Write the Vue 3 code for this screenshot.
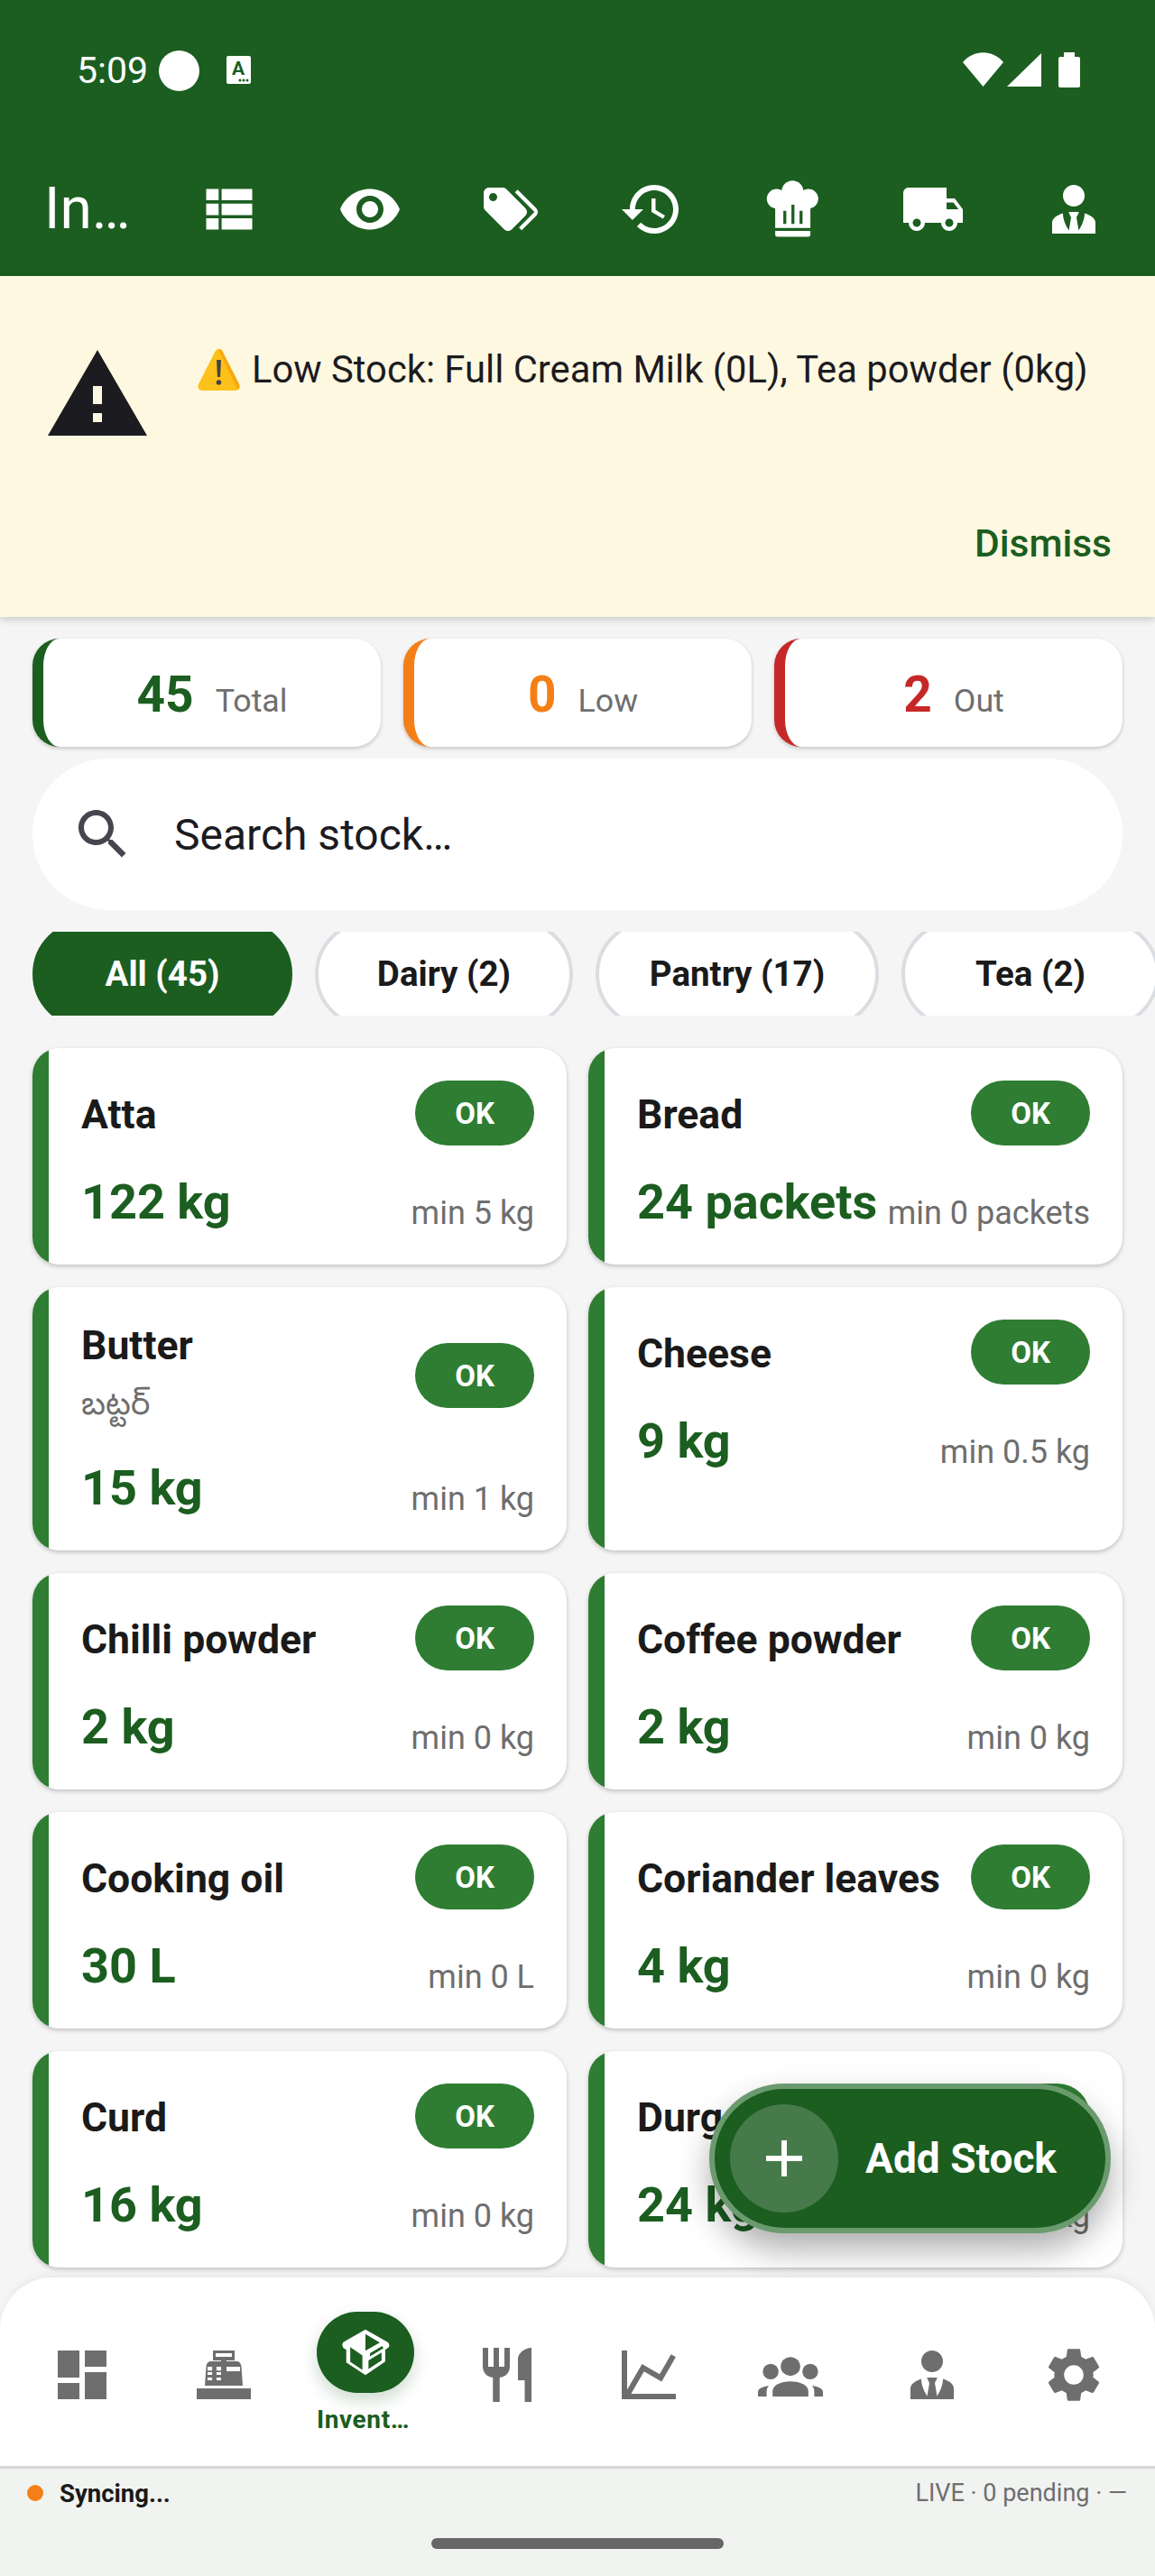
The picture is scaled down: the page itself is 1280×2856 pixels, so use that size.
<script setup>
const paths = {
  viewList: 'M3.500 14.200h4.600v-4.300H3.500v4.300zm0 5.300h4.600v-4.200H3.500v4.200zM3.500 8.700h4.600V4.500H3.500v4.200zm5.700 5.500h11.300v-4.300H9.200v4.300zm0 5.300h11.300v-4.200H9.200v4.200zm0-15v4.200h11.300V4.500H9.200z',
  visibility: 'M12 4.500C7 4.500 2.730 7.610 1 12c1.730 4.390 6 7.500 11 7.500s9.270-3.110 11-7.500c-1.730-4.390-6-7.500-11-7.500zM12 17c-2.760 0-5-2.240-5-5s2.240-5 5-5 5 2.240 5 5-2.240 5-5 5zm0-8c-1.660 0-3 1.340-3 3s1.340 3 3 3 3-1.340 3-3-1.340-3-3-3z',
  tags: 'M5.500,9A1.500,1.500 0 0,0 7,7.500A1.500,1.500 0 0,0 5.500,6A1.500,1.500 0 0,0 4,7.500A1.500,1.500 0 0,0 5.500,9M17.410,11.580C17.770,11.940 18,12.440 18,13C18,13.550 17.780,14.050 17.410,14.410L12.410,19.410C12.050,19.770 11.550,20 11,20C10.450,20 9.950,19.780 9.580,19.410L2.590,12.420C2.220,12.050 2,11.550 2,11V6C2,4.890 2.890,4 4,4H9C9.550,4 10.050,4.220 10.410,4.580L17.410,11.580M13.540,5.710L14.540,4.710L21.410,11.580C21.780,11.940 22,12.450 22,13C22,13.550 21.780,14.050 21.420,14.410L16.040,19.790L15.040,18.790L20.750,13L13.540,5.710Z',
  history: 'M13 3c-4.970 0-9 4.030-9 9H1l3.890 3.890.070.140L9 12H6c0-3.870 3.130-7 7-7s7 3.130 7 7-3.130 7-7 7c-1.930 0-3.680-.790-4.940-2.060l-1.420 1.420C8.270 19.990 10.510 21 13 21c4.970 0 9-4.030 9-9s-4.030-9-9-9zm-1 5v5l4.280 2.540.720-1.210-3.500-2.080V8H12z',
  truck: 'M20 8h-3V4H3c-1.100 0-2 .9-2 2v11h2c0 1.660 1.340 3 3 3s3-1.340 3-3h6c0 1.660 1.340 3 3 3s3-1.340 3-3h2v-5l-3-4zM6 18.500c-.830 0-1.500-.670-1.500-1.500s.670-1.500 1.500-1.500 1.500.670 1.500 1.500-.670 1.500-1.500 1.500zm13.500-9l1.960 2.500H17V9.500h2.500zm-1.500 9c-.830 0-1.500-.670-1.500-1.500s.670-1.500 1.500-1.500 1.500.670 1.500 1.500-.670 1.500-1.500 1.500z',
  tie: 'M12 3C14.210 3 16 4.790 16 7S14.210 11 12 11 8 9.210 8 7 9.790 3 12 3M16 13.540C16 14.600 15.720 17.070 13.810 19.830L13 15L13.940 13.120C13.320 13.050 12.670 13 12 13C11.330 13 10.680 13.050 10.060 13.120L11 15L10.190 19.830C8.280 17.070 8 14.600 8 13.540C5.610 14.240 4 15.500 4 17V21H20V17C20 15.500 18.400 14.240 16 13.540Z',
  dashboard: 'M3 13h8V3H3v10zm0 8h8v-6H3v6zm10 0h8V11h-8v10zm0-18v6h8V3h-8z',
  register: 'M2 17h20v4H2zM8 3h8v3.700h-3v.3h3.700c1 0 1.700.7 1.800 2L19 16H5l.5-7c.1-1.300.8-2 1.800-2H11v-.3H8zM9 4v1.300h6V4zM6 9v1.400h1.700V9zM9.300 9v1.400H11V9zM13 9v1.700h5V9zM6 11v1h1.700v-1zM9.300 11v1H11v-1zM6 13v1h1.700v-1zM9.300 13v1H11v-1z',
  restaurant: 'M11 9H9V2H7v7H5V2H3v7c0 2.120 1.660 3.840 3.750 3.970V22h2.500v-9.030C11.340 12.840 13 11.120 13 9V2h-2v7zm5-3v8h2.500v8H21V2c-2.760 0-5 2.240-5 4z',
  chart: 'M16,11.780L20.240,4.450L21.970,5.450L16.740,14.500L10.230,10.750L5.460,19H22V21H2V3H4V17.540L9.500,8L16,11.780Z',
  gear: 'M19.140 12.940c.040-.300.060-.610.060-.940 0-.320-.020-.640-.070-.940l2.030-1.580c.180-.140.230-.410.120-.610l-1.920-3.320c-.120-.220-.370-.290-.590-.220l-2.390.960c-.500-.380-1.030-.700-1.620-.940l-.360-2.540c-.040-.240-.240-.410-.480-.410h-3.840c-.240 0-.430.170-.470.410l-.360 2.540c-.590.240-1.130.570-1.620.940l-2.390-.960c-.220-.080-.470 0-.590.220L2.740 8.870c-.120.210-.080.470.120.610l2.030 1.580c-.050.300-.090.630-.090.940s.020.640.070.940l-2.030 1.580c-.180.140-.230.410-.12.610l1.920 3.320c.120.220.370.290.590.220l2.390-.960c.500.380 1.030.700 1.620.940l.360 2.540c.050.240.240.410.480.410h3.840c.240 0 .440-.17.470-.41l.360-2.540c.590-.240 1.130-.560 1.620-.940l2.390.960c.220.080.470 0 .590-.220l1.920-3.320c.120-.220.070-.470-.120-.610l-2.010-1.580zM12 15.600c-1.980 0-3.600-1.620-3.600-3.600s1.620-3.600 3.600-3.600 3.600 1.620 3.600 3.600-1.620 3.600-3.600 3.600z',
  warning: 'M1 21h22L12 2 1 21zm12-3h-2v-2h2v2zm0-4h-2v-4h2v4z',
  search: 'M15.500 14h-.790l-.280-.270C15.410 12.590 16 11.110 16 9.500 16 5.910 13.090 3 9.500 3S3 5.910 3 9.500 5.910 16 9.500 16c1.610 0 3.090-.590 4.230-1.570l.270.280v.790l5 4.990L20.490 19l-4.990-5zm-6 0C7.010 14 5 11.990 5 9.500S7.010 5 9.500 5 14 7.010 14 9.500 11.990 14 9.500 14z',
  box: 'M135 70L208 112Q216 118 212 128L200 137V175L135 220L72 178V137L62 130Q56 120 62 112ZM135 85L182 113L135 140ZM85 128L125 155V203L85 176ZM150 148L190 124L194 132L150 158ZM145 172L188 146V172L145 200Z'
}

const topIcons = [paths.viewList, paths.visibility, paths.tags, paths.history, 'hat', paths.truck, paths.tie]

const stats = [
  { value: 45, label: 'Total', tone: 'green' },
  { value: 0, label: 'Low', tone: 'orange' },
  { value: 2, label: 'Out', tone: 'red' }
]

const chips = [
  { label: 'All (45)', width: 288, active: true },
  { label: 'Dairy (2)', width: 286 },
  { label: 'Pantry (17)', width: 314 },
  { label: 'Tea (2)', width: 286 }
]

const items = [
  { name: 'Atta', qty: '122 kg', min: 'min 5 kg' },
  { name: 'Bread', qty: '24 packets', min: 'min 0 packets' },
  { name: 'Butter', sub: 'బట్టర్', qty: '15 kg', min: 'min 1 kg' },
  { name: 'Cheese', qty: '9 kg', min: 'min 0.5 kg' },
  { name: 'Chilli powder', qty: '2 kg', min: 'min 0 kg' },
  { name: 'Coffee powder', qty: '2 kg', min: 'min 0 kg' },
  { name: 'Cooking oil', qty: '30 L', min: 'min 0 L' },
  { name: 'Coriander leaves', qty: '4 kg', min: 'min 0 kg' },
  { name: 'Curd', qty: '16 kg', min: 'min 0 kg' },
  { name: 'Durga', qty: '24 kg', min: 'min 0 kg' }
]

const navIcons = [paths.dashboard, paths.register, paths.box, paths.restaurant, paths.chart, 'groups', paths.tie, paths.gear]
</script>

<template>
  <div class="screen">
    <header class="top">
      <div class="status">
        <span class="time">5:09</span>
        <span class="dot-white"></span>
        <svg class="a-icon" viewBox="0 0 27 31">
          <rect width="27" height="31" rx="2" fill="#fff" />
          <text x="13" y="21" text-anchor="middle" class="a-letter">A</text>
          <circle cx="15" cy="27" r="1.500" fill="#1b5e20" />
          <circle cx="19" cy="27" r="1.500" fill="#1b5e20" />
          <circle cx="23" cy="27" r="1.500" fill="#1b5e20" />
        </svg>
        <span class="spacer"></span>
        <svg class="wifi" viewBox="0 0 45 38"><path d="M0 11C12-3.500 33-3.500 45 11L22.500 38z" fill="#fff" /></svg>
        <svg class="signal" viewBox="0 0 38 37"><path d="M38 0v37H0z" fill="#fff" /></svg>
        <svg class="battery" viewBox="0 0 24 39"><path d="M6 0h12v5h4a2 2 0 0 1 2 2v30a2 2 0 0 1-2 2H2a2 2 0 0 1-2-2V7a2 2 0 0 1 2-2h4z" fill="#fff" /></svg>
      </div>
      <div class="appbar">
        <span class="title">In…</span>
        <span v-for="(d, i) in topIcons" :key="i" class="top-btn">
          <svg v-if="d === 'hat'" class="top-icon" viewBox="0 0 24 24">
            <circle cx="12.100" cy="5.400" r="4" fill="#fff" />
            <circle cx="6.200" cy="8.100" r="3.600" fill="#fff" />
            <circle cx="18" cy="8.100" r="3.600" fill="#fff" />
            <path d="M5.700 8h13v10.900h-13zM8.700 12.600v4.800h1.100v-4.800zM11.700 10.300v7.100h1.100v-7.100zM14.700 12.600v4.800h1.100v-4.800z" fill="#fff" fill-rule="evenodd" />
            <path d="M5.700 20h13v1.400a.8.8 0 0 1-.8.800H6.500a.8.8 0 0 1-.8-.8z" fill="#fff" />
          </svg>
          <svg v-else class="top-icon" viewBox="0 0 24 24"><path :d="d" fill="#fff" /></svg>
        </span>
      </div>
    </header>

    <section class="banner">
      <svg class="warn-icon" viewBox="0 0 24 24"><path :d="paths.warning" fill="#1c1b1f" /></svg>
      <div class="banner-text">
        <svg class="emoji" viewBox="0 0 47 46">
          <path d="M23.500 0C26 0 27.500 2 28.500 4.500L46 39c1.500 3.500 0 7-4 7H5c-4 0-5.500-3.500-4-7L18.500 4.500C19.500 2 21 0 23.500 0z" fill="#fcc21b" />
          <path d="M23.500 0C26 0 27.500 2 28.500 4.500L46 39c1 2.500.6 5-1.500 6.200L24 3z" fill="#f9a80e" />
          <path d="M21 12h5l-1 19h-3z" fill="#444" />
          <circle cx="23.500" cy="37" r="2.800" fill="#444" />
        </svg>
        <span>Low Stock: Full Cream Milk (0L), Tea powder (0kg)</span>
      </div>
      <div class="dismiss">Dismiss</div>
    </section>

    <main class="content">
      <div class="stats">
        <div v-for="s in stats" :key="s.label" class="stat" :class="s.tone">
          <span class="stat-value">{{ s.value }}</span>
          <span class="stat-label">{{ s.label }}</span>
        </div>
      </div>

      <div class="search">
        <svg class="search-icon" viewBox="0 0 24 24"><path :d="paths.search" fill="#49454f" /></svg>
        <span>Search stock…</span>
      </div>

      <div class="chips">
        <div
          v-for="c in chips"
          :key="c.label"
          class="chip"
          :class="{ active: c.active }"
          :style="{ width: c.width + 'px' }"
        >{{ c.label }}</div>
      </div>

      <div class="grid">
        <article v-for="it in items" :key="it.name" class="card">
          <div class="card-top">
            <div class="names">
              <div class="name">{{ it.name }}</div>
              <div v-if="it.sub" class="sub">{{ it.sub }}</div>
            </div>
            <span class="pill">OK</span>
          </div>
          <div class="card-bottom">
            <span class="qty">{{ it.qty }}</span>
            <span class="min">{{ it.min }}</span>
          </div>
        </article>
      </div>

      <div class="fab">
        <span class="fab-circle">
          <svg viewBox="0 0 40 40" class="plus"><path d="M17 0h6v17h17v6H23v17h-6V23H0v-6h17z" fill="#fff" /></svg>
        </span>
        <span class="fab-text">Add Stock</span>
      </div>
    </main>

    <nav class="nav">
      <div v-for="(d, i) in navIcons" :key="i" class="nav-item" :class="{ current: i === 2 }">
        <template v-if="i === 2">
          <span class="nav-pill">
            <svg class="box-icon" viewBox="55 65 160 160"><path :d="d" fill="#fff" fill-rule="evenodd" /></svg>
          </span>
          <span class="nav-label">Invent…</span>
        </template>
        <svg v-else-if="d === 'groups'" class="nav-icon" viewBox="0 0 24 24">
          <circle cx="4.700" cy="10.800" r="2.900" fill="#6e6e6e" />
          <circle cx="19.300" cy="10.800" r="2.900" fill="#6e6e6e" />
          <ellipse cx="12" cy="8.900" rx="4.400" ry="4.400" fill="#fff" />
          <ellipse cx="12" cy="8.900" rx="3.600" ry="3.500" fill="#6e6e6e" />
          <path d="M5.400 20v-2c0-2.200 3-3.600 6.600-3.600s6.600 1.400 6.600 3.600v2z" fill="#6e6e6e" />
          <path d="M0 20v-1.700c0-1.200 1.700-2 4-2.300-.6.700-.8 1.500-.8 2.400V20zM24 20v-1.700c0-1.200-1.700-2-4-2.300.6.700.8 1.500.8 2.400V20z" fill="#6e6e6e" />
        </svg>
        <svg v-else class="nav-icon" viewBox="0 0 24 24"><path :d="d" fill="#6e6e6e" fill-rule="evenodd" /></svg>
      </div>
    </nav>

    <footer class="foot">
      <div class="foot-row">
        <span class="sync-dot"></span>
        <span class="sync">Syncing...</span>
        <span class="live">LIVE · 0 pending · —</span>
      </div>
      <div class="home-bar"></div>
    </footer>
  </div>
</template>

<style scoped>
.screen {
  width: 1280px;
  height: 2856px;
  display: flex;
  flex-direction: column;
  overflow: hidden;
  background: #f5f5f5;
  font-family: Roboto, "Noto Sans", sans-serif;
  color: #1a1a1a;
}
.top {
  height: 306px;
  flex-shrink: 0;
  background: #1b5e20;
  color: #fff;
}
.status {
  height: 154px;
  padding: 56px 83px 0 85px;
  box-sizing: border-box;
  display: flex;
  align-items: flex-start;
}
.time {
  font-size: 41px;
  line-height: 44px;
  width: 91px;
}
.dot-white {
  width: 45px;
  height: 45px;
  border-radius: 50%;
  background: #fff;
}
.a-icon {
  width: 27px;
  height: 31px;
  margin: 6px 0 0 30px;
}
.a-letter {
  font-size: 21px;
  font-weight: 700;
  fill: #1b5e20;
}
.spacer {
  flex: 1;
}
.wifi {
  width: 45px;
  height: 38px;
  margin-top: 2px;
}
.signal {
  width: 38px;
  height: 37px;
  margin: 3px 0 0 4px;
}
.battery {
  width: 24px;
  height: 39px;
  margin: 2px 0 0 19px;
}
.appbar {
  height: 152px;
  display: flex;
  align-items: center;
  padding: 3px 12px 0 49px;
  box-sizing: border-box;
}
.title {
  flex: 1;
  font-size: 64px;
  line-height: 72px;
}
.top-btn {
  width: 156px;
  display: flex;
  justify-content: center;
}
.top-icon {
  width: 72px;
  height: 72px;
  display: block;
}
.banner {
  height: 378px;
  flex-shrink: 0;
  box-sizing: border-box;
  position: relative;
  background: #fff8e1;
  box-shadow: 0 3px 8px rgba(0, 0, 0, 0.18);
  z-index: 2;
  padding: 72px 36px 0 48px;
}
.warn-icon {
  width: 120px;
  height: 120px;
  display: block;
}
.banner-text {
  display: flex;
  align-items: center;
  gap: 13px;
  position: absolute;
  top: 80px;
  left: 219px;
  font-size: 41.750px;
  line-height: 48px;
  white-space: nowrap;
  color: #1c1b1f;
}
.emoji {
  width: 47px;
  height: 46px;
}
.dismiss {
  position: absolute;
  right: 48px;
  top: 274px;
  font-size: 42.500px;
  line-height: 46px;
  font-weight: 500;
  color: #1b5e20;
}
.content {
  flex: 1;
  min-height: 0;
  position: relative;
  overflow: hidden;
  padding: 24px 36px 0;
}
.stats {
  display: grid;
  grid-template-columns: repeat(3, 1fr);
  gap: 25px;
}
.stat {
  height: 120px;
  box-sizing: border-box;
  background: #fff;
  border-radius: 30px;
  border-left: 12px solid #1b5e20;
  box-shadow: 0 2px 4px rgba(0, 0, 0, 0.2);
  display: flex;
  align-items: baseline;
  justify-content: center;
  gap: 24px;
  padding-top: 30px;
}
.stat.orange {
  border-left-color: #f57f17;
}
.stat.red {
  border-left-color: #c62828;
}
.stat-value {
  font-size: 55px;
  line-height: 64px;
  font-weight: 700;
  color: #1b5e20;
}
.orange .stat-value {
  color: #f57f17;
}
.red .stat-value {
  color: #c62828;
}
.stat-label {
  font-size: 35.750px;
  color: #6e6e6e;
}
.search {
  height: 168px;
  margin-top: 13px;
  background: #fff;
  border-radius: 84px;
  display: flex;
  align-items: center;
  padding-left: 42px;
  font-size: 48px;
  color: #1c1b1f;
}
.search-icon {
  width: 72px;
  height: 72px;
  margin-right: 43px;
}
.chips {
  height: 93px;
  margin: 24px -36px 0 0;
  display: flex;
  align-items: center;
  gap: 25px;
  overflow: hidden;
}
.chip {
  flex-shrink: 0;
  height: 120px;
  box-sizing: border-box;
  border-radius: 60px;
  border: 4px solid #dadde2;
  background: #fff;
  display: flex;
  align-items: center;
  justify-content: center;
  font-size: 38.500px;
  font-weight: 700;
}
.chip.active {
  background: #1b5e20;
  border-color: #1b5e20;
  color: #fff;
}
.grid {
  margin-top: 36px;
  display: grid;
  grid-template-columns: 1fr 1fr;
  gap: 25px 24px;
}
.card {
  background: #fff;
  border-radius: 30px;
  overflow: hidden;
  box-shadow: 0 2px 5px rgba(0, 0, 0, 0.22);
  padding: 36px 36px 36px 54px;
  position: relative;
}
.card::before {
  content: "";
  position: absolute;
  left: 0;
  top: 0;
  bottom: 0;
  width: 18px;
  background: #2e7d32;
}
.card-top {
  display: flex;
  align-items: center;
  justify-content: space-between;
}
.name {
  font-size: 44.500px;
  line-height: 52px;
  font-weight: 700;
  color: #1a1a1a;
  white-space: nowrap;
  padding-top: 3px;
}
.sub {
  font-family: "Noto Sans", Roboto, sans-serif;
  font-size: 36px;
  line-height: 64px;
  padding-top: 5px;
  color: #6e6e6e;
}
.pill {
  width: 132px;
  height: 72px;
  flex-shrink: 0;
  border-radius: 36px;
  background: #2e7d32;
  color: #fff;
  display: flex;
  align-items: center;
  justify-content: center;
  font-size: 33px;
  font-weight: 700;
}
.card-bottom {
  margin-top: 30px;
  display: flex;
  align-items: flex-end;
  justify-content: space-between;
  white-space: nowrap;
}
.qty {
  font-size: 54px;
  line-height: 65px;
  padding-bottom: 1px;
  font-weight: 700;
  color: #1b5e20;
}
.min {
  font-size: 36px;
  line-height: 42px;
  color: #6e6e6e;
}
.fab {
  position: absolute;
  left: 786px;
  top: 1626px;
  width: 445px;
  height: 166px;
  box-sizing: border-box;
  border-radius: 83px;
  background: #1b5e20;
  border: 6px solid #6a9a6e;
  box-shadow: 0 18px 36px rgba(0, 0, 0, 0.32);
  display: flex;
  align-items: center;
  padding-left: 17px;
}
.fab-circle {
  width: 120px;
  height: 120px;
  border-radius: 50%;
  background: #477a4b;
  display: flex;
  align-items: center;
  justify-content: center;
}
.plus {
  width: 40px;
  height: 40px;
}
.fab-text {
  margin-left: 30px;
  font-size: 46px;
  font-weight: 700;
  color: #fff;
}
.nav {
  height: 212px;
  flex-shrink: 0;
  position: relative;
  z-index: 3;
  box-sizing: border-box;
  background: #fff;
  border-radius: 58px 58px 0 0;
  box-shadow: 0 -3px 10px rgba(0, 0, 0, 0.05);
  border-bottom: 3px solid #d4d7d4;
  display: grid;
  grid-template-columns: repeat(8, 157px);
  padding-left: 12px;
}
.nav-item {
  display: flex;
  align-items: center;
  justify-content: center;
}
.nav-item.current {
  flex-direction: column;
  justify-content: flex-start;
  padding-top: 38px;
}
.nav-icon {
  width: 72px;
  height: 72px;
  display: block;
  margin-top: 7px;
}
.nav-pill {
  width: 108px;
  height: 90px;
  border-radius: 46px;
  background: #1b5e20;
  box-shadow: 0 8px 18px rgba(27, 94, 32, 0.22);
  display: flex;
  align-items: center;
  justify-content: center;
}
.box-icon {
  width: 54px;
  height: 54px;
  display: block;
}
.nav-label {
  margin: 14px 4px 0 0;
  font-size: 28px;
  line-height: 32px;
  letter-spacing: 0.6px;
  font-weight: 700;
  color: #1b5e20;
  white-space: nowrap;
}
.foot {
  height: 119px;
  flex-shrink: 0;
  background: #f1f3f1;
  position: relative;
}
.foot-row {
  display: flex;
  align-items: center;
  padding: 11px 31px 0 30px;
  height: 32px;
}
.sync-dot {
  width: 18px;
  height: 18px;
  border-radius: 50%;
  background: #f57f17;
}
.sync {
  margin-left: 18px;
  font-size: 27.500px;
  font-weight: 700;
  flex: 1;
  color: #1a1a1a;
}
.live {
  font-size: 27px;
  color: #6e6e6e;
}
.home-bar {
  position: absolute;
  left: 478px;
  top: 77px;
  width: 324px;
  height: 12px;
  border-radius: 6px;
  background: #666;
}
</style>
